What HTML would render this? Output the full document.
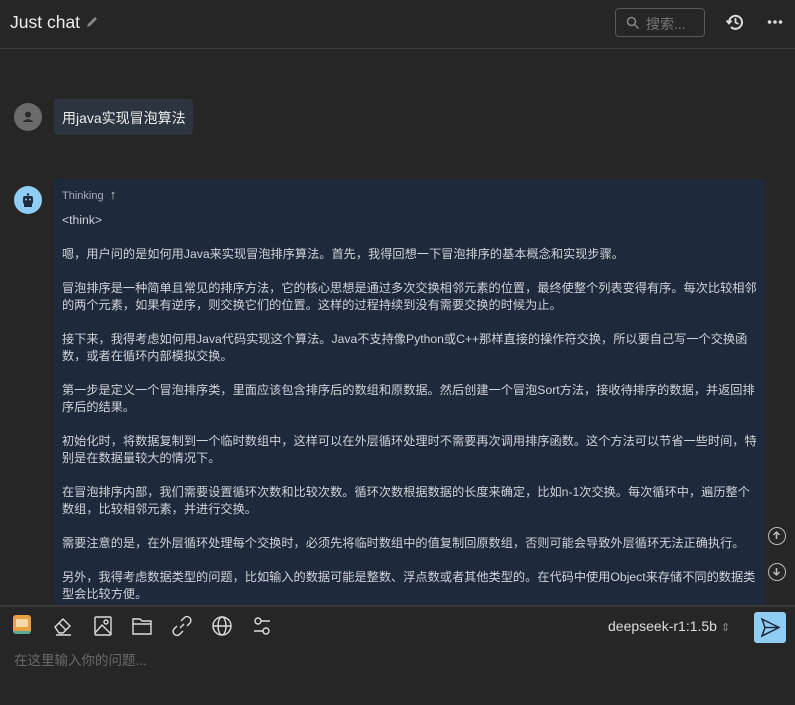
<!DOCTYPE html>
<html><head><meta charset="utf-8"><style>
*{margin:0;padding:0;box-sizing:border-box}
body{width:795px;height:705px;background:#262626;font-family:"Liberation Sans","Noto Sans CJK SC",sans-serif;color:#ddd;position:relative;overflow:hidden}
.hdr{position:absolute;left:0;top:0;width:795px;height:49px;border-bottom:1px solid #3c3c3c}
.title{position:absolute;left:10px;top:12px;font-size:17.5px;color:#eee}
.search{position:absolute;left:615px;top:8px;width:90px;height:29px;border:1px solid #5a5a5a;border-radius:4px;color:#777;font-size:14px;padding:5px 0 0 30px}
.ub{position:absolute;left:54px;top:99px;width:139px;height:36px;background:#2c3440;border-radius:4px;font-size:14px;color:#eee;padding:9px 8px;white-space:nowrap}
.av{position:absolute;width:28px;height:28px;border-radius:50%}
.ab{position:absolute;left:54px;top:179px;width:711px;height:426px;background:#1e293b;border-radius:4px 4px 0 0;padding:0 8px;font-size:12.2px;line-height:17px;color:#cfd3da;overflow:hidden}
.ab p{margin-bottom:17px}
.bar{position:absolute;left:0;top:605px;width:795px;height:100px;border-top:2px solid #3a3a3a;background:#262626}
.ic{position:absolute;top:8px}
.sb{position:absolute;width:18px;height:18px;border:1.5px solid #bbb;border-radius:50%;left:768px}
</style></head><body>
<div class="hdr">
<div class="title">Just chat <svg width="14" height="14" viewBox="0 0 14 14" style="vertical-align:-1px"><path d="M2 12 L3 9 L10 2 L12 4 L5 11 Z" fill="#888"/></svg></div>
<div class="search"><svg width="14" height="14" viewBox="0 0 14 14" style="position:absolute;left:10px;top:7px"><circle cx="5.5" cy="5.5" r="4" stroke="#888" stroke-width="1.5" fill="none"/><path d="M8.5 8.5 L12.5 12.5" stroke="#888" stroke-width="1.5"/></svg>搜索...</div>
<svg style="position:absolute;left:725px;top:12px" width="20" height="20" viewBox="0 0 20 20"><path d="M4 10 A6.5 6.5 0 1 1 6 15" stroke="#ddd" stroke-width="2" fill="none"/><path d="M1.5 8.5 L4 11.5 L6.5 8.5" stroke="#ddd" stroke-width="1.8" fill="none"/><path d="M10.5 6 V10.5 L13.5 12" stroke="#ddd" stroke-width="1.8" fill="none"/></svg>
<svg style="position:absolute;left:767px;top:19px" width="16" height="6"><circle cx="2.5" cy="3" r="1.8" fill="#ddd"/><circle cx="8" cy="3" r="1.8" fill="#ddd"/><circle cx="13.5" cy="3" r="1.8" fill="#ddd"/></svg>
</div>
<div class="av" style="left:14px;top:103px;background:#6b6b6b"><svg width="28" height="28" viewBox="0 0 28 28"><circle cx="14" cy="11.5" r="3" fill="#2a2a2a"/><path d="M8.5 19 Q14 13.5 19.5 19 Z" fill="#2a2a2a"/></svg></div>
<div class="ub">用java实现冒泡算法</div>
<div class="av" style="left:14px;top:186px;background:#90cdf4"><svg width="28" height="28" viewBox="0 0 28 28"><rect x="9" y="10" width="10" height="8" rx="2" fill="#1e293b"/><circle cx="14" cy="8.5" r="1.2" fill="#1e293b"/><rect x="10" y="18" width="8" height="3" fill="#1e293b"/><circle cx="12" cy="13.5" r="1" fill="#90cdf4"/><circle cx="16" cy="13.5" r="1" fill="#90cdf4"/></svg></div>
<div class="ab">
<div style="font-size:11px;color:#aab;margin-top:7px;height:24px">Thinking &nbsp;<span style="font-size:13px;color:#ccc">↑</span></div>
<p style="margin-top:2px">&lt;think&gt;</p>
<p>嗯，用户问的是如何用Java来实现冒泡排序算法。首先，我得回想一下冒泡排序的基本概念和实现步骤。</p>
<p>冒泡排序是一种简单且常见的排序方法，它的核心思想是通过多次交换相邻元素的位置，最终使整个列表变得有序。每次比较相邻的两个元素，如果有逆序，则交换它们的位置。这样的过程持续到没有需要交换的时候为止。</p>
<p>接下来，我得考虑如何用Java代码实现这个算法。Java不支持像Python或C++那样直接的操作符交换，所以要自己写一个交换函数，或者在循环内部模拟交换。</p>
<p>第一步是定义一个冒泡排序类，里面应该包含排序后的数组和原数据。然后创建一个冒泡Sort方法，接收待排序的数据，并返回排序后的结果。</p>
<p>初始化时，将数据复制到一个临时数组中，这样可以在外层循环处理时不需要再次调用排序函数。这个方法可以节省一些时间，特别是在数据量较大的情况下。</p>
<p>在冒泡排序内部，我们需要设置循环次数和比较次数。循环次数根据数据的长度来确定，比如n-1次交换。每次循环中，遍历整个数组，比较相邻元素，并进行交换。</p>
<p>需要注意的是，在外层循环处理每个交换时，必须先将临时数组中的值复制回原数组，否则可能会导致外层循环无法正确执行。</p>
<p>另外，我得考虑数据类型的问题，比如输入的数据可能是整数、浮点数或者其他类型的。在代码中使用Object来存储不同的数据类型会比较方便。</p>
</div>
<div class="sb" style="top:527px"><svg width="15" height="15" viewBox="0 0 15 15"><path d="M7.5 11 V4 M4.5 7 L7.5 4 L10.5 7" stroke="#bbb" stroke-width="1.5" fill="none"/></svg></div>
<div class="sb" style="top:563px"><svg width="15" height="15" viewBox="0 0 15 15"><path d="M7.5 4 V11 M4.5 8 L7.5 11 L10.5 8" stroke="#bbb" stroke-width="1.5" fill="none"/></svg></div>
<div class="bar">
<div class="ic" style="left:13px;width:18px;height:19px;background:#e8a040;border-radius:3px;border-bottom:3px solid #5a9"><div style="margin:4px 3px;width:12px;height:8px;background:#f5d9a8;border-radius:1px"></div></div>
<svg class="ic" style="left:52px" width="22" height="22" viewBox="0 0 22 22" fill="none" stroke="#ddd" stroke-width="1.4"><path d="M3 12 L11 4 L18 11 L11 18 L7 18 Z M7 8 L14 15 M4 20 H19"/></svg>
<svg class="ic" style="left:92px" width="22" height="22" viewBox="0 0 22 22" fill="none" stroke="#ddd" stroke-width="1.4"><rect x="3" y="2" width="16" height="18" rx="1"/><circle cx="14" cy="7" r="2"/><path d="M3 18 L10 10 L19 19"/></svg>
<svg class="ic" style="left:131px" width="22" height="22" viewBox="0 0 22 22" fill="none" stroke="#ddd" stroke-width="1.4"><path d="M2 4 H9 L11 6 H20 V19 H2 Z M2 9 H20"/></svg>
<svg class="ic" style="left:171px" width="22" height="22" viewBox="0 0 22 22" fill="none" stroke="#ddd" stroke-width="1.4"><path d="M9 13 L13 9 M10 6 L13 3 A3.5 3.5 0 0 1 19 8 L16 11 M12 16 L9 19 A3.5 3.5 0 0 1 3 14 L6 11"/></svg>
<svg class="ic" style="left:211px" width="22" height="22" viewBox="0 0 22 22" fill="none" stroke="#ddd" stroke-width="1.4"><circle cx="11" cy="11" r="9"/><ellipse cx="11" cy="11" rx="4" ry="9"/><path d="M2 11 H20"/></svg>
<svg class="ic" style="left:251px" width="22" height="22" viewBox="0 0 22 22" fill="none" stroke="#ddd" stroke-width="1.4"><circle cx="7" cy="6" r="3"/><path d="M10 6 H19 M3 16 H12"/><circle cx="15" cy="16" r="3"/></svg>
<div style="position:absolute;left:608px;top:11px;font-size:14px;color:#ddd">deepseek-r1:1.5b <span style="font-size:11px;color:#888">⇕</span></div>
<div style="position:absolute;left:754px;top:5px;width:32px;height:31px;background:#90cdf4;border-radius:3px"><svg width="32" height="31" viewBox="0 0 32 31" fill="none" stroke="#1e293b" stroke-width="1.5"><path d="M8 7 L25 15.5 L8 24 L11 15.5 Z M11 15.5 H25"/></svg></div>
<div style="position:absolute;left:14px;top:42px;font-size:13.5px;color:#6a6a6a">在这里输入你的问题...</div>
</div>
</body></html>
